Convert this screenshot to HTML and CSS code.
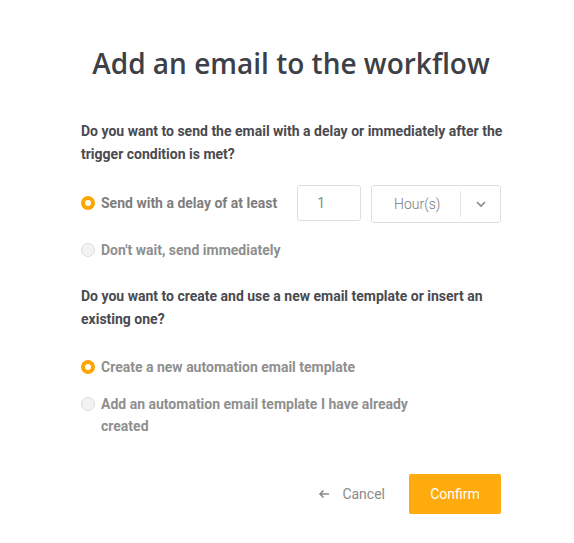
FILE: index.html
```html
<!DOCTYPE html>
<html>
<head>
<meta charset="utf-8">
<link rel="stylesheet" href="styles.css">
</head>
<body>
<div class="modal">
  <h1 class="title">Add an email to the workflow</h1>
  <p class="question q1">Do you want to send the email with a delay or immediately after the trigger condition is met?</p>
  <div class="option delay-row">
    <span class="radio checked"></span>
    <span class="label dark nowrap">Send with a delay of at least</span>
    <div class="num-input">1</div>
    <div class="select">
      <span class="select-value">Hour(s)</span>
      <span class="select-arrow">
        <svg width="12" height="8" viewBox="0 0 12 8"><path d="M2 2 L6 6 L10 2" fill="none" stroke="#888" stroke-width="1.6"/></svg>
      </span>
    </div>
  </div>
  <div class="option opt2">
    <span class="radio"></span>
    <span class="label">Don't wait, send immediately</span>
  </div>
  <p class="question q2">Do you want to create and use a new email template or insert an existing one?</p>
  <div class="option opt3">
    <span class="radio checked"></span>
    <span class="label">Create a new automation email template</span>
  </div>
  <div class="option opt4">
    <span class="radio"></span>
    <span class="label narrow">Add an automation email template I have already created</span>
  </div>
  <div class="actions">
    <button class="cancel">
      <svg width="12" height="10" viewBox="0 0 12 10"><path d="M11 5 H2 M5.5 1.5 L2 5 L5.5 8.5" fill="none" stroke="#8a8a8a" stroke-width="1.6"/></svg>
      <span>Cancel</span>
    </button>
    <button class="confirm">Confirm</button>
  </div>
</div>
</body>
</html>
```

FILE: styles.css
```css
* { box-sizing: border-box; }
html, body { margin: 0; padding: 0; background: #fff; }
body { font-family: Roboto, "Liberation Sans", sans-serif; }
.modal {
  width: 420px;
  margin-left: 81px;
  padding-top: 43px;
}
.title {
  margin: 0 0 0 -20px;
  width: 460px;
  text-align: center;
  font-family: "Open Sans", sans-serif;
  font-weight: 600;
  font-size: 28px;
  line-height: 40px;
  color: #3d4046;
}
.question {
  margin: 0 -8px 0 0;
  font-size: 14px;
  font-weight: 700;
  line-height: 23px;
  color: #4a4a50;
}
.q1 { margin-top: 37px; }
.q2 { margin-top: 24px; margin-right: 0; }
.option {
  display: flex;
  align-items: flex-start;
}
.radio {
  flex: none;
  width: 14px;
  height: 14px;
  border-radius: 50%;
  border: 1px solid #dcdcdc;
  background: #f3f3f3;
  margin-right: 6px;
  margin-top: 4px;
}
.radio.checked {
  border: 4px solid #ffa500;
  background: #fff;
}
.label {
  font-size: 14px;
  font-weight: 700;
  line-height: 22px;
  color: #8f8f8f;
}
.label.dark { color: #7e7e7e; }
.label.nowrap { white-space: nowrap; }
.label.narrow { width: 320px; }
.delay-row { margin-top: 18px; align-items: center; }
.delay-row .radio { margin-top: 0; }
.num-input {
  flex: none;
  margin-left: 20px;
  width: 64px;
  height: 36px;
  border: 1px solid #dedede;
  border-radius: 3px;
  font-size: 14px;
  line-height: 34px;
  padding-left: 19px;
  color: #8a8a8a;
}
.select {
  flex: none;
  margin-left: 10px;
  width: 130px;
  height: 38px;
  border: 1px solid #dedede;
  border-radius: 3px;
  display: flex;
  align-items: center;
  position: relative;
  top: 1px;
}
.select-value {
  flex: 1;
  text-align: center;
  font-size: 14px;
  font-weight: 300;
  color: #7a7a7a;
  padding-left: 2px;
}
.select-arrow {
  width: 40px;
  height: 26px;
  border-left: 1px solid #e4e4e4;
  display: flex;
  align-items: center;
  justify-content: center;
}
.opt2 { margin-top: 17px; }
.opt3 { margin-top: 25px; }
.opt4 { margin-top: 15px; }
.actions {
  margin-top: 37px;
  display: flex;
  justify-content: flex-end;
  align-items: center;
}
.cancel {
  border: 0;
  background: none;
  font-family: Roboto, sans-serif;
  font-size: 14px;
  color: #8a8a8a;
  display: flex;
  align-items: center;
  gap: 12px;
  padding: 0;
  margin-right: 24px;
}
.confirm {
  width: 92px;
  height: 40px;
  border: 0;
  border-radius: 2px;
  background: #ffab0d;
  color: #fff;
  font-family: Roboto, sans-serif;
  font-size: 14px;
  font-weight: 400;
}
```
